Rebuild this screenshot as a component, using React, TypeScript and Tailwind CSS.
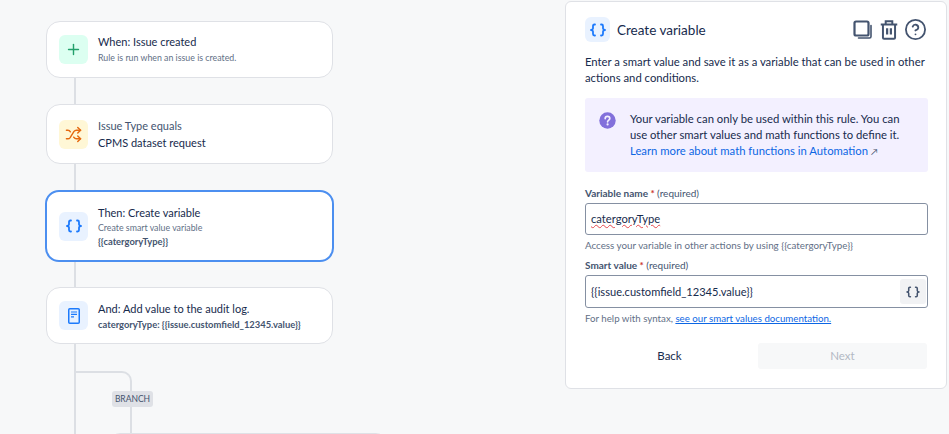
import type { ReactNode } from "react";
import { CircleHelp, Plus, Shuffle } from "lucide-react";

function BracesIcon({ className }: { className: string }) {
  return (
    <svg viewBox="0 0 16 14" fill="none" stroke="currentColor" strokeWidth="1.8" strokeLinecap="round" strokeLinejoin="round" className={className}>
      <path d="M5 1.5H4.4C3.4 1.5 3 2 3 3V5.6C3 6.4 2.4 6.8 1 7C2.4 7.2 3 7.6 3 8.4V11C3 12 3.4 12.5 4.4 12.5H5" />
      <path d="M11 1.5H11.6C12.6 1.5 13 2 13 3V5.6C13 6.4 13.6 6.8 15 7C13.6 7.2 13 7.6 13 8.4V11C13 12 12.6 12.5 11.6 12.5H11" />
    </svg>
  );
}

function LogIcon() {
  return (
    <svg viewBox="0 0 16 16" fill="none" className="w-[16px] h-[16px] text-[#1d7afc]" stroke="currentColor">
      <rect x="2.75" y="0.75" width="10.5" height="14.5" rx="1" strokeWidth="1.5" />
      <path d="M5 4H11M5 6.4H11M5 8.8H8" strokeWidth="1.2" />
    </svg>
  );
}

function CopyIcon() {
  return (
    <svg viewBox="0 0 20 20" fill="none" stroke="currentColor" className="w-[20px] h-[20px] mr-[1px]">
      <rect x="1.5" y="1.5" width="14" height="14" rx="1.5" strokeWidth="2.2" />
      <path d="M18 5.5V16.5C18 17.4 17.4 18 16.5 18H5.5" strokeWidth="1.6" strokeLinecap="round" />
    </svg>
  );
}

function TrashIcon() {
  return (
    <svg viewBox="0 0 20 20" fill="none" stroke="currentColor" strokeWidth="1.8" className="w-[22px] h-[22px]">
      <path d="M2.5 5H17.5M7 5V2H13V5" />
      <path d="M4.5 5V17C4.5 17.6 5 18 5.5 18H14.5C15 18 15.5 17.6 15.5 17V5" />
      <path d="M8.3 8.5V14M11.7 8.5V14" strokeWidth="2" />
    </svg>
  );
}

function InfoIcon() {
  return (
    <svg viewBox="0 0 17 17" className="w-[17px] h-[17px] shrink-0 mt-[1px]">
      <circle cx="8.5" cy="8.5" r="8.2" fill="#8270db" />
      <path d="M6.2 6.6C6.2 5.3 7.2 4.4 8.5 4.4C9.8 4.4 10.8 5.3 10.8 6.5C10.8 8 8.6 8.2 8.6 9.8" fill="none" stroke="#f3f0ff" strokeWidth="1.7" strokeLinecap="round" />
      <circle cx="8.6" cy="12.4" r="1.1" fill="#f3f0ff" />
    </svg>
  );
}

function IconBox({ className, children }: { className: string; children: ReactNode }) {
  return <div className={`w-[29px] h-[29px] rounded-md flex items-center justify-center shrink-0 ${className}`}>{children}</div>;
}

function RuleCard({ icon, height, selected, textClass, children }: { icon: ReactNode; height: string; selected?: boolean; textClass?: string; children: ReactNode }) {
  return (
    <div
      className={`${height} bg-white rounded-[14px] flex items-center gap-[10px] ${
        selected ? "w-[289px] -ml-[1px] border-2 border-[#4c8ff0] pl-[12px]" : "w-[287px] border border-[#dfe1e6] pl-[12px]"
      }`}
    >
      {icon}
      <div className={`min-w-0 whitespace-nowrap ${textClass ?? ""}`}>{children}</div>
    </div>
  );
}

function Connector({ height }: { height: string }) {
  return <div className={`w-[2px] ml-[28px] bg-[#dcdfe4] ${height}`} />;
}

function RuleColumn() {
  return (
    <div className="w-[565px] shrink-0 pl-[46px] pt-[21px] relative">
      <RuleCard height="h-[57px]" icon={<IconBox className="bg-[#dcfff1]"><Plus className="w-[17px] h-[17px] text-[#22a06b]" strokeWidth={2} /></IconBox>}>
        <div className="text-[11px] leading-[16px] text-[#172b4d]">When: Issue created</div>
        <div className="text-[8.8px] leading-[14px] mt-[1px] text-[#626f86]">Rule is run when an issue is created.</div>
      </RuleCard>
      <Connector height="h-[26px]" />
      <RuleCard height="h-[60px]" icon={<IconBox className="bg-[#fff7d6]"><Shuffle className="w-[17px] h-[17px] text-[#e56910]" strokeWidth={2} /></IconBox>}>
        <div className="text-[11px] leading-[17px] text-[#44546f]">Issue Type equals</div>
        <div className="text-[11px] leading-[17px] text-[#172b4d]">CPMS dataset request</div>
      </RuleCard>
      <Connector height="h-[26px]" />
      <RuleCard selected textClass="pt-[1px]" height="h-[72px]" icon={<IconBox className="bg-[#e9f2ff]"><BracesIcon className="w-[16px] h-[14px] text-[#1d7afc]" /></IconBox>}>
        <div className="text-[11px] leading-[16px] text-[#172b4d]">Then: Create variable</div>
        <div className="text-[8.8px] leading-[14px] text-[#626f86]">Create smart value variable</div>
        <div className="text-[9.4px] leading-[14px] font-bold text-[#44546f]">{"{{catergoryType}}"}</div>
      </RuleCard>
      <Connector height="h-[25px]" />
      <RuleCard textClass="pt-[1px]" height="h-[57px]" icon={<IconBox className="bg-[#e9f2ff]"><LogIcon /></IconBox>}>
        <div className="text-[11px] leading-[16px] text-[#172b4d]">And: Add value to the audit log.</div>
        <div className="text-[9.4px] leading-[14px] mt-[1px] font-bold text-[#44546f]">{"catergoryType: {{issue.customfield_12345.value}}"}</div>
      </RuleCard>
      <Connector height="h-[90px]" />

      {/* branch off the main line */}
      <div className="absolute left-[76px] top-[371px] w-[56px] h-[63px] border-t-2 border-r-2 border-[#dcdfe4] rounded-tr-[10px]" />
      <div className="absolute left-[112px] top-[391px] w-[41px] h-[16px] rounded-[3px] bg-[#dfe1e6] text-center text-[8.5px] leading-[16px] text-[#44546f]">BRANCH</div>
      <div className="absolute left-[110px] top-[433px] w-[276px] h-[20px] bg-white border border-[#dfe1e6] rounded-[14px]" />
    </div>
  );
}

function VariablePanel() {
  return (
    <div className="w-[382px] h-[388px] mt-[1px] bg-white border border-[#dfe1e6] rounded-[6px] pl-[19px] pr-[18px] pt-[15px]">
      <div className="flex items-center">
        <div className="w-[25px] h-[25px] rounded-md bg-[#e9f2ff] flex items-center justify-center">
          <BracesIcon className="w-[16px] h-[14px] text-[#1d7afc]" />
        </div>
        <div className="ml-[7px] mt-[2px] text-[13.5px] text-[#172b4d]">Create variable</div>
        <div className="ml-auto mr-[1px] flex items-center gap-[4px] text-[#44546f]">
          <CopyIcon />
          <TrashIcon />
          <CircleHelp className="w-[23px] h-[23px]" strokeWidth={1.9} />
        </div>
      </div>

      <p className="mt-[12px] text-[11.3px] leading-[16px] text-[#172b4d]">
        Enter a smart value and save it as a variable that can be used in other actions and conditions.
      </p>

      <div className="mt-[12px] h-[74px] bg-[#f3f0ff] rounded-[3px] pl-[14px] pt-[13px] flex gap-[14px]">
        <InfoIcon />
        <div className="text-[11.3px] leading-[16px] text-[#172b4d] whitespace-nowrap">
          <div>Your variable can only be used within this rule. You can</div>
          <div>use other smart values and math functions to define it.</div>
          <div className="text-[#0c66e4]">
            Learn more about math functions in Automation <span className="text-[9px] text-[#44546f]">↗</span>
          </div>
        </div>
      </div>

      <div className="mt-[14px] text-[10px] leading-[14px] font-bold text-[#44546f]">
        Variable name<span className="text-[#c9372c]"> *</span> <span className="font-normal">(required)</span>
      </div>
      <div className="mt-[3px] h-[32px] border border-[#8590a2] rounded-[3px] flex items-center pl-[5px] text-[11.2px] text-[#172b4d]">
        <span className="underline decoration-wavy decoration-[#e5484d] decoration-1">catergoryType</span>
      </div>
      <div className="mt-[3px] text-[9.8px] leading-[14px] text-[#626f86]">{"Access your variable in other actions by using {{catergoryType}}"}</div>

      <div className="mt-[6px] text-[10px] leading-[14px] font-bold text-[#44546f]">
        Smart value<span className="text-[#c9372c]"> *</span> <span className="font-normal">(required)</span>
      </div>
      <div className="mt-[3px] h-[33px] border border-[#8590a2] rounded-[3px] flex items-center justify-between pl-[5px] pr-[1px] text-[11.1px] text-[#172b4d]">
        <span className="pt-[1px]">{"{{issue.customfield_12345.value}}"}</span>
        <div className="w-[26px] h-[25px] rounded-[3px] bg-[#f1f2f4] flex items-center justify-center">
          <BracesIcon className="w-[14px] h-[12px] text-[#44546f]" />
        </div>
      </div>
      <div className="mt-[3px] text-[9.7px] leading-[14px] text-[#626f86]">
        For help with syntax, <span className="text-[#0c66e4] underline">see our smart values documentation.</span>
      </div>

      <div className="mt-[18px] flex gap-[4px]">
        <div className="w-[169px] h-[26px] flex items-center justify-center text-[11.5px] text-[#172b4d]">Back</div>
        <div className="w-[169px] h-[26px] rounded-[3px] bg-[#f7f8f9] flex items-center justify-center text-[11.5px] text-[#b3b9c4]">Next</div>
      </div>
    </div>
  );
}

export default function App() {
  return (
    <div className="w-[949px] h-[434px] overflow-hidden bg-[#f7f8f9] flex font-['Lato',sans-serif]">
      <RuleColumn />
      <VariablePanel />
    </div>
  );
}
